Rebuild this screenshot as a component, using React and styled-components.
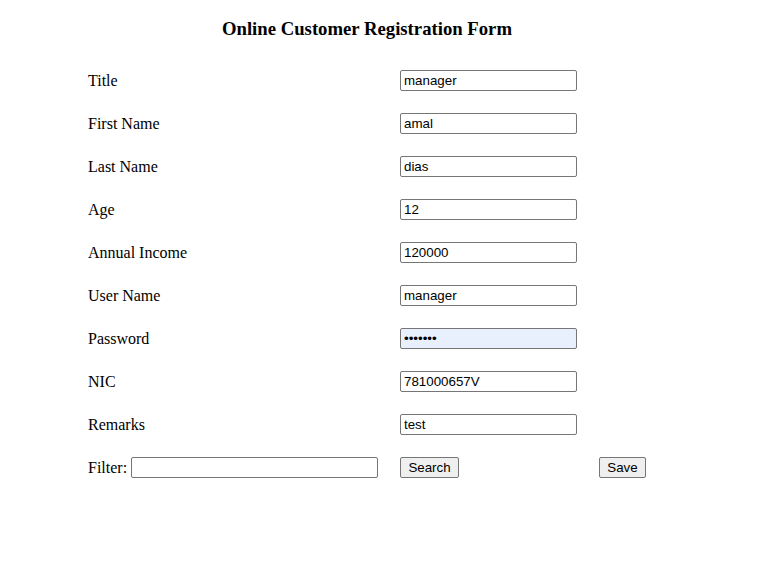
import React from 'react';
import styled, {createGlobalStyle} from 'styled-components';

const GlobalStyle = createGlobalStyle`
    body {
        margin: 0;
        background: #fff;
        font-family: "Liberation Serif", "Times New Roman", serif;
        color: #000;
    }
`

const Page = styled.div`
    width: 558px;
    margin-left: 88px;
    padding-top: 18px;
`

const Heading = styled.h3`
    margin: 0 0 31px;
    text-align: center;
    font-size: 18.72px;
    line-height: 21px;
    font-weight: bold;
`

const Form = styled.div`
    display: grid;
    grid-template-columns: 312px 199px 47px;
    grid-auto-rows: 21px;
    row-gap: 22px;
    align-items: center;
`

const Label = styled.div`
    font-size: 16px;
    grid-column: 1;
`

const Input = styled.input`
    box-sizing: border-box;
    width: ${p => p.$width || 177}px;
    height: 21px;
    border: 1px solid #767676;
    border-radius: 2px;
    padding: 1px 3px;
    font-family: "Liberation Sans", Arial, sans-serif;
    font-size: 13.33px;
    color: #000;
    background: ${p => p.$filled ? '#e8f0fe' : '#fff'};
    outline: none;
`

const Cell = styled.div`
    display: flex;
    align-items: center;
`

const FilterCell = styled.div`
    display: flex;
    align-items: center;
    font-size: 16px;
    gap: 4px;
`

const Button = styled.button`
    box-sizing: border-box;
    height: 21px;
    padding: 1px 6px;
    border: 1px solid #767676;
    border-radius: 2px;
    background: #efefef;
    font-family: "Liberation Sans", Arial, sans-serif;
    font-size: 13.33px;
    color: #000;
    width: ${p => p.$width}px;
`

const fields = [
    {label: 'Title', value: 'manager'},
    {label: 'First Name', value: 'amal'},
    {label: 'Last Name', value: 'dias'},
    {label: 'Age', value: '12'},
    {label: 'Annual Income', value: '120000'},
    {label: 'User Name', value: 'manager'},
    {label: 'Password', value: 'manager', type: 'password'},
    {label: 'NIC', value: '781000657V'},
    {label: 'Remarks', value: 'test'},
]

const App = () => {
    return (
        <>
            <GlobalStyle />
            <Page>
                <Heading>Online Customer Registration Form</Heading>
                <Form>
                    {fields.map(f => (
                        <React.Fragment key={f.label}>
                            <Label>{f.label}</Label>
                            <Cell>
                                <Input
                                    type={f.type || 'text'}
                                    defaultValue={f.value}
                                    $filled={f.type === 'password'}
                                />
                            </Cell>
                            <div />
                        </React.Fragment>
                    ))}
                    <FilterCell>
                        Filter:<Input $width={247} />
                    </FilterCell>
                    <Cell><Button $width={59}>Search</Button></Cell>
                    <Cell><Button $width={47}>Save</Button></Cell>
                </Form>
            </Page>
        </>
    )
}

export default App;
